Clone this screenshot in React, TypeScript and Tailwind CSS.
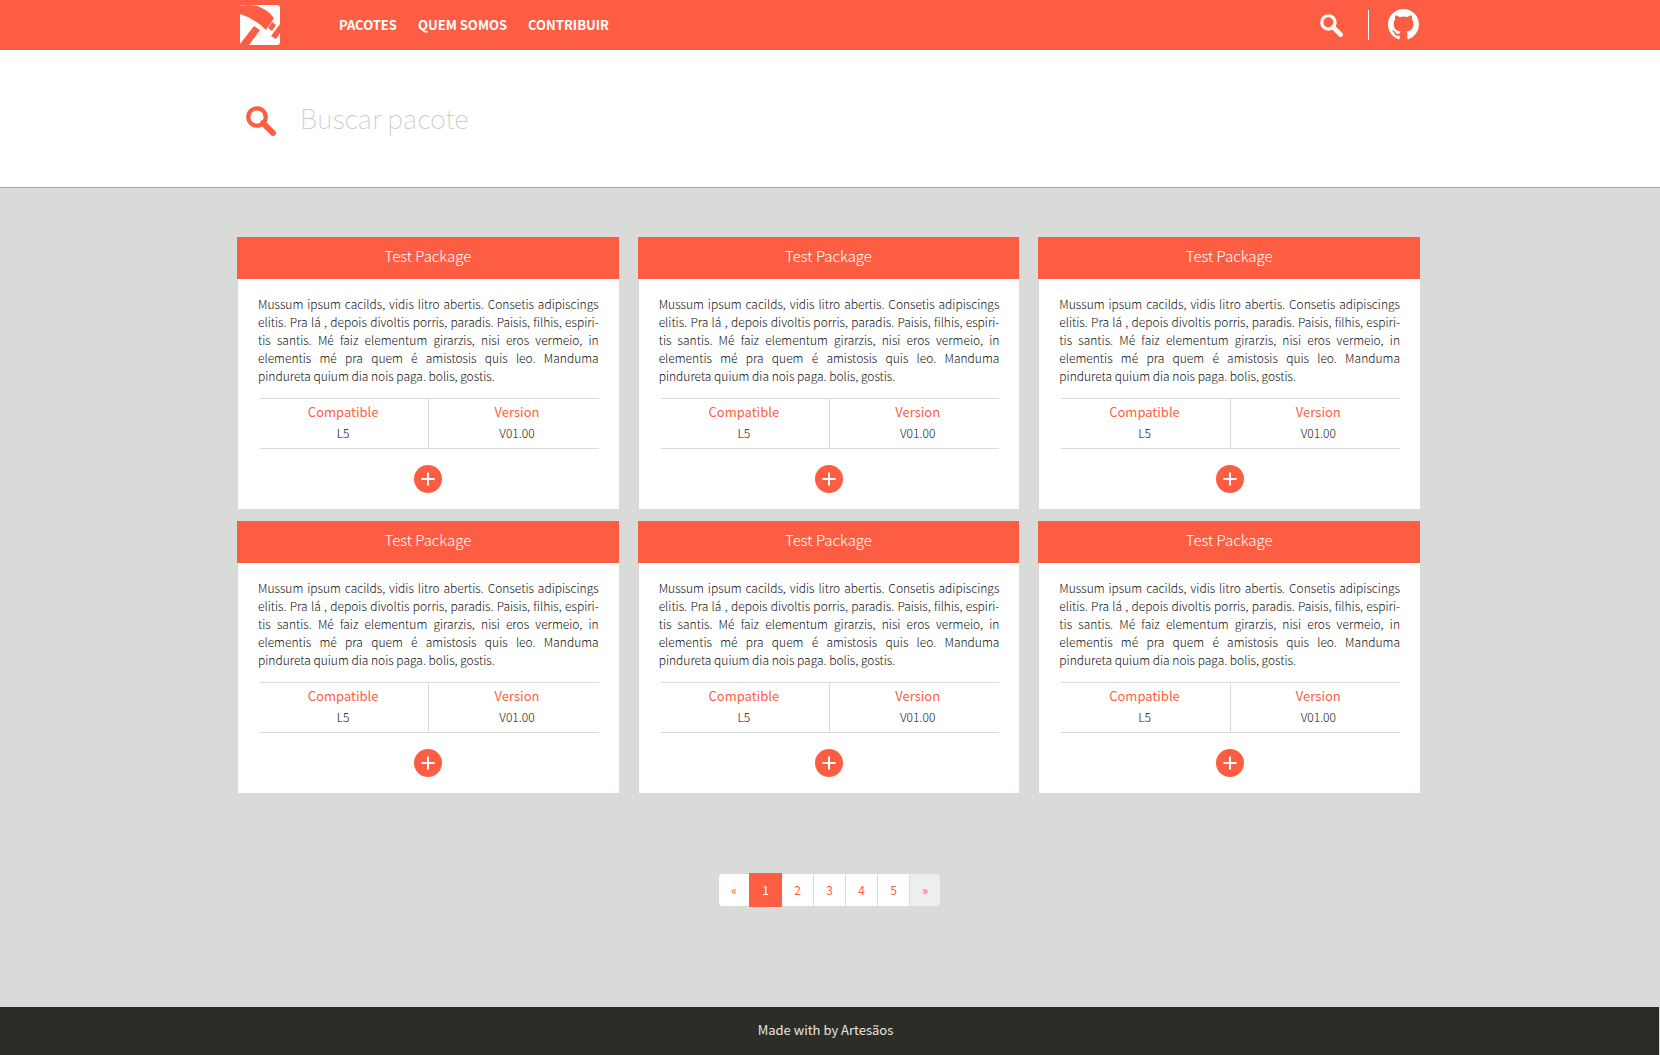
import React from "react";
import { Plus } from "lucide-react";

const navLinks = ["PACOTES", "QUEM SOMOS", "CONTRIBUIR"];
const packages = [1, 2, 3, 4, 5, 6];
const pages = ["2", "3", "4", "5"];
const description =
  "Mussum ipsum cacilds, vidis litro abertis. Consetis adipiscings elitis. Pra lá , depois divoltis porris, paradis. Paisis, filhis, espiri\u00ADtis santis. Mé faiz elementum girarzis, nisi eros vermeio, in elementis mé pra quem é amistosis quis leo. Manduma pindureta quium dia nois paga. bolis, gostis.";

function Logo() {
  return (
    <svg viewBox="0 0 40 40" className="size-10" aria-hidden="true">
      <rect width="40" height="40" rx="3" fill="#fff" />
      <g fill="#fd5e43">
        <path d="M0 1 Q8 -1 17 1 Q27 4 34 13 L26 25 Q14 13 0 9 Z" />
        <path d="M14 21 L20 25 L9 40 L1 40 L0 39 Z" />
        <path d="M32 17 L36 20 L32 26 L28 23 Z" />
        <path d="M40 19 L31 31 L36 34 L40 28 Z" />
      </g>
    </svg>
  );
}

function SearchIcon({ className }: { className: string }) {
  return (
    <svg viewBox="0 0 30 30" className={className} fill="none" stroke="currentColor" aria-hidden="true">
      <circle cx="11" cy="11" r="8.7" strokeWidth="4.2" />
      <path d="M17 17 L27 27" strokeWidth="6" strokeLinecap="round" />
    </svg>
  );
}

function GithubIcon() {
  return (
    <svg viewBox="0 0 16 16" className="size-[31px]" fill="currentColor" aria-hidden="true">
      <path d="M8 0C3.58 0 0 3.58 0 8c0 3.54 2.29 6.53 5.47 7.59.4.07.55-.17.55-.38 0-.19-.01-.82-.01-1.49-2.01.37-2.53-.49-2.69-.94-.09-.23-.48-.94-.82-1.13-.28-.15-.68-.52-.01-.53.63-.01 1.08.58 1.23.82.72 1.21 1.87.87 2.33.66.07-.52.28-.87.51-1.07-1.78-.2-3.64-.89-3.64-3.95 0-.87.31-1.59.82-2.15-.08-.2-.36-1.02.08-2.12 0 0 .67-.21 2.2.82.64-.18 1.32-.27 2-.27s1.36.09 2 .27c1.53-1.04 2.2-.82 2.2-.82.44 1.1.16 1.92.08 2.12.51.56.82 1.27.82 2.15 0 3.07-1.87 3.75-3.65 3.95.29.25.54.73.54 1.48 0 1.07-.01 1.93-.01 2.2 0 .21.15.46.55.38A8.01 8.01 0 0 0 16 8c0-4.42-3.58-8-8-8z" />
    </svg>
  );
}

function PackageCard() {
  return (
    <article>
      <h2 className="h-[42px] bg-[#fd5e43] text-center text-[15px] leading-[38px] font-light text-white">
        Test Package
      </h2>
      <div className="ml-px bg-white px-5 pt-4 pb-4">
        <p className="text-justify text-[12px] leading-[18px] font-light text-[#111111] [hyphenate-character:'-']">
          {description}
        </p>
        <dl className="mt-[13px] ml-0.5 grid grid-cols-2 divide-x divide-[#d9dbd8] border-y border-[#d9dbd8] text-center">
          <div className="pt-[3px] pr-0.5 pb-1">
            <dt className="text-[13px] leading-5 font-normal text-[#fd5e43]">Compatible</dt>
            <dd className="text-[12px] leading-[22px] font-light text-[#111111]">L5</dd>
          </div>
          <div className="pt-[3px] pb-1 pl-1.5">
            <dt className="text-[13px] leading-5 font-normal text-[#fd5e43]">Version</dt>
            <dd className="text-[12px] leading-[22px] font-light text-[#111111]">V01.00</dd>
          </div>
        </dl>
        <button
          type="button"
          aria-label="Ver pacote"
          className="mx-auto mt-4 flex size-7 items-center justify-center rounded-full bg-[#fd5e43] text-white"
        >
          <Plus size={20} strokeWidth={2.4} />
        </button>
      </div>
    </article>
  );
}

export default function App() {
  return (
    <div className="flex min-h-screen flex-col bg-[#d9dbd8] font-['Noto_Sans_CJK_SC','Open_Sans',sans-serif] text-[#2d2d28]">
      <header className="bg-[#fd5e43] text-white">
        <div className="mx-auto flex h-[50px] max-w-[1186px] items-center pr-1 pl-[3px]">
          <a href="#inicio" aria-label="Artesãos">
            <Logo />
          </a>
          <nav className="ml-[59px] flex gap-[21px] text-[13px] leading-5 font-bold">
            {navLinks.map((label) => (
              <a key={label} href="#menu">
                {label}
              </a>
            ))}
          </nav>
          <button type="button" aria-label="Buscar" className="ml-auto">
            <SearchIcon className="size-[23px]" />
          </button>
          <div className="mr-[19px] ml-[25px] h-[30px] w-px bg-white" />
          <a href="#github" aria-label="GitHub" className="-mt-0.5">
            <GithubIcon />
          </a>
        </div>
      </header>

      <section className="border-b border-[#a3a5a2] bg-white">
        <form className="mx-auto flex h-[137px] max-w-[1186px] items-center pr-[3px] pl-[9px]">
          <label htmlFor="busca" aria-label="Buscar pacote" className="mt-1 text-[#fd5e43]">
            <SearchIcon className="size-[30px]" />
          </label>
          <input
            id="busca"
            type="text"
            placeholder="Buscar pacote"
            className="mb-[3px] ml-6 h-12 flex-1 bg-transparent text-[27px] font-thin outline-none placeholder:text-[#cccccc]"
          />
        </form>
      </section>

      <main className="mx-auto flex w-full max-w-[1186px] flex-1 flex-col pt-[49px] pr-[3px]">
        <div className="grid grid-cols-3 gap-x-[19px] gap-y-3">
          {packages.map((id) => (
            <PackageCard key={id} />
          ))}
        </div>
        <nav aria-label="Paginação" className="mt-20 mb-[100px] flex items-center justify-center pl-0.5 text-[12px] text-[#fd5e43]">
          <a href="#anterior" className="flex h-8 w-[30px] items-center justify-center rounded-l bg-white">
            «
          </a>
          <a href="#p1" aria-current="page" className="flex h-[34px] w-[33px] items-center justify-center bg-[#fd5e43] text-white">
            1
          </a>
          {pages.map((n) => (
            <a key={n} href="#pagina" className="flex h-8 w-8 items-center justify-center border-r border-[#dddddd] bg-white">
              {n}
            </a>
          ))}
          <a href="#proxima" className="flex h-8 w-[30px] items-center justify-center rounded-r bg-[#eeeeee]">
            »
          </a>
        </nav>
      </main>

      <footer className="mr-px h-12 bg-[#2d2d28] pr-2 text-center text-[13px] leading-[46px] text-[#e6e6e0]">
        Made with by Artesãos
      </footer>
    </div>
  );
}
